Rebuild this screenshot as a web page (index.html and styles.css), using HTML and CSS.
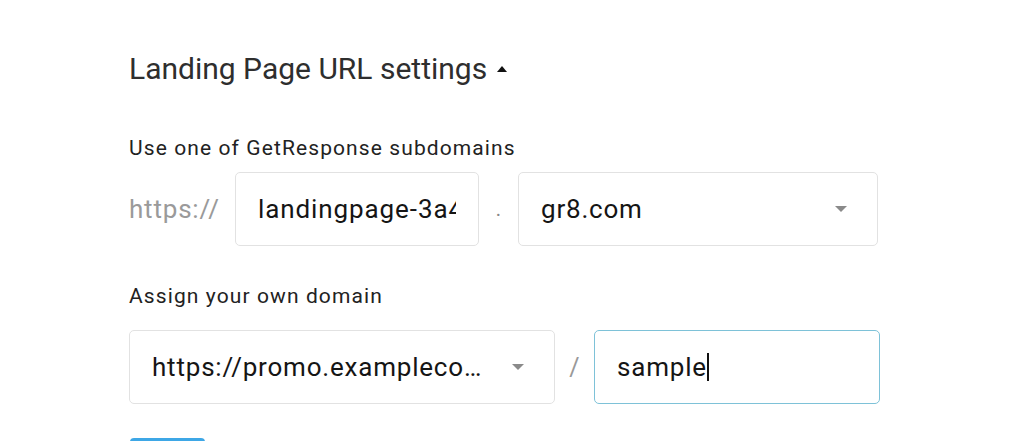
FILE: index.html
```html
<!DOCTYPE html>
<html lang="en">
<head>
	<meta charset="UTF-8">
	<title>Landing Page URL settings</title>
	<link rel="stylesheet" href="styles.css">
</head>
<body>
<div class="wrap">
	<h1 class="title">Landing Page URL settings <span class="caret"><svg width="10" height="6" viewBox="0 0 10 6"><path d="M0 6 L5 0 L10 6 Z" fill="#111"/></svg></span></h1>

	<p class="label first">Use one of GetResponse subdomains</p>
	<div class="row">
		<span class="proto">https://</span>
		<div class="box sub"><span class="val">landingpage-3a4b2c</span></div>
		<span class="sep">.</span>
		<div class="box select dom"><span class="val">gr8.com</span><span class="arrow"></span></div>
	</div>

	<p class="label second">Assign your own domain</p>
	<div class="row">
		<div class="box select own"><span class="val ell">https://promo.examplecompany.com</span><span class="arrow"></span></div>
		<span class="slash">/</span>
		<div class="box path focus"><span class="val">sample</span><span class="cursor"></span></div>
	</div>

	<div class="btn"></div>
</div>
</body>
</html>
```

FILE: styles.css
```css
*{margin: 0;padding: 0;box-sizing: border-box;}
body{background: #fff;font-family: Roboto, "Liberation Sans", sans-serif;color: #222;}
.wrap{padding-left: 129px;padding-top: 52px;height: 441px;overflow: hidden;}
.title{font-size: 30px;line-height: 34px;font-weight: normal;color: #2e2e2e;display: flex;align-items: center;}
.caret{display: inline-flex;margin-left: 10px;margin-top: -1px;}
.label{font-size: 21px;line-height: 24px;color: #222;letter-spacing: 1.1px;}
.label.first{margin-top: 50px;}
.label.second{margin-top: 38px;}
.row{display: flex;align-items: center;margin-top: 12px;}
.label.second + .row{margin-top: 22px;}
.proto{font-size: 26px;letter-spacing: 0.8px;color: #9a9a9a;width: 106px;}
.box{height: 74px;border: 1.5px solid #e2e2e2;border-radius: 5px;display: flex;align-items: center;padding: 0 22px;font-size: 26px;letter-spacing: 0.8px;color: #151515;overflow: hidden;}
.val{white-space: nowrap;}
.val.ell{overflow: hidden;text-overflow: ellipsis;max-width: 336px;}
.sub{width: 244px;}
.sub .val{overflow: hidden;min-width: 0;letter-spacing: 0.9px;}
.sep{width: 39px;text-align: center;font-size: 20px;color: #888;}
.dom{width: 360px;}
.select{justify-content: space-between;padding-right: 30px;}
.arrow{flex: none;width: 0;height: 0;border-left: 6px solid transparent;border-right: 6px solid transparent;border-top: 6px solid #8a8a8a;}
.own{width: 426px;}
.slash{width: 39px;text-align: center;font-size: 25px;color: #999;}
.path{width: 286px;border-color: #7ec2d8;}
.cursor{flex: none;width: 2px;height: 28px;background: #111;margin-left: 0;}
.btn{width: 75px;height: 10px;background: #3ea7e6;border-radius: 4px;margin-top: 34px;margin-left: 1px;}
```
